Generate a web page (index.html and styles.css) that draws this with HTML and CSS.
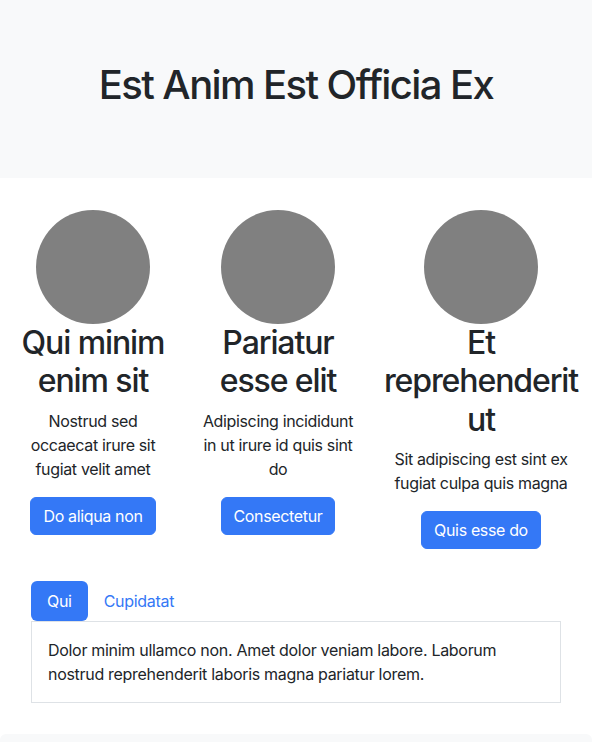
FILE: index.html
```html
<!DOCTYPE html>
<html lang="en">
<head>
<meta charset="utf-8">
<title>Est Anim Est Officia Ex</title>
<link rel="stylesheet" href="styles.css">
</head>
<body>
<header class="hero">
  <h1 class="hero-title">Est Anim Est Officia Ex</h1>
</header>
<main>
  <section class="features">
    <div class="feature feature-a">
      <div class="avatar"></div>
      <h2 class="feature-title">Qui minim enim sit</h2>
      <p class="feature-text">Nostrud sed occaecat irure sit fugiat velit amet</p>
      <a class="btn" href="#">Do aliqua non</a>
    </div>
    <div class="feature feature-b">
      <div class="avatar"></div>
      <h2 class="feature-title">Pariatur esse elit</h2>
      <p class="feature-text">Adipiscing incididunt in ut irure id quis sint do</p>
      <a class="btn" href="#">Consectetur</a>
    </div>
    <div class="feature feature-c">
      <div class="avatar"></div>
      <h2 class="feature-title">Et reprehenderit ut</h2>
      <p class="feature-text">Sit adipiscing est sint ex fugiat culpa quis magna</p>
      <a class="btn" href="#">Quis esse do</a>
    </div>
  </section>
  <section class="tabs">
    <nav class="tab-nav">
      <a class="tab-link active" href="#">Qui</a>
      <a class="tab-link" href="#">Cupidatat</a>
    </nav>
    <div class="tab-panel">
      <p>Dolor minim ullamco non. Amet dolor veniam labore. Laborum nostrud reprehenderit laboris magna pariatur lorem.</p>
    </div>
  </section>
</main>
<footer class="footer"></footer>
</body>
</html>
```
FILE: styles.css
```css
* { box-sizing: border-box; }
html, body { margin: 0; padding: 0; }
body {
  font-family: Inter, "Noto Sans", sans-serif;
  font-size: 16px;
  line-height: 1.5;
  color: #212529;
  background: #fff;
}
.hero {
  background: #f8f9fa;
  padding: 61px 16px 69px;
  text-align: center;
}
.hero-title {
  margin: 0;
  font-size: 40px;
  font-weight: 500;
  line-height: 1.2;
  letter-spacing: -1.6px;
}
.features {
  display: flex;
  padding: 32px 16px 32px;
  align-items: flex-start;
}
.feature {
  display: flex;
  flex-direction: column;
  align-items: center;
  text-align: center;
}
.feature-a { width: 154px; padding: 0; }
.feature-a .feature-text { padding: 0 6px; }
.feature-b { width: 216px; padding: 0 30px; }
.feature-c { width: 190px; padding: 0; }
.avatar {
  width: 114px;
  height: 114px;
  border-radius: 50%;
  background: #808080;
}
.feature-title {
  margin: 0 -10px 8px;
  font-size: 32px;
  font-weight: 500;
  line-height: 1.2;
  letter-spacing: -1.1px;
}
.feature-text {
  margin: 0 0 16px;
  letter-spacing: -0.35px;
}
.btn {
  display: inline-block;
  background: #3478f6;
  color: #fff;
  text-decoration: none;
  padding: 6px 12px;
  border: 1px solid #3478f6;
  border-radius: 6px;
  line-height: 24px;
  letter-spacing: -0.35px;
}
.tabs {
  padding: 0 31px 31px;
}
.tab-nav {
  display: flex;
}
.tab-link {
  display: block;
  padding: 8px 16px;
  line-height: 24px;
  color: #3478f6;
  text-decoration: none;
  border-radius: 6px;
  letter-spacing: -0.3px;
}
.tab-link.active {
  background: #3478f6;
  color: #fff;
}
.tab-panel {
  border: 1px solid #dee2e6;
  padding: 16px;
}
.tab-panel p {
  margin: 0;
  letter-spacing: -0.3px;
}
.footer {
  background: #f8f9fa;
  height: 40px;
  border-radius: 6px 6px 0 0;
}
```
